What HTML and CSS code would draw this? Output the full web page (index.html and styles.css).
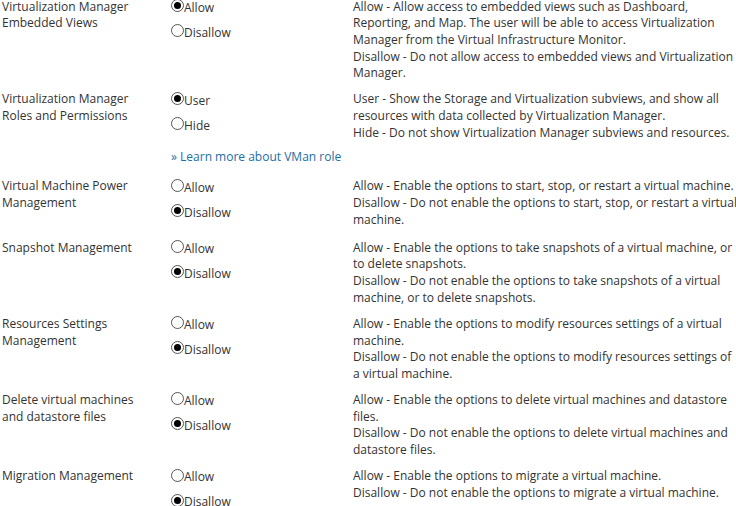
FILE: index.html
```html
<!DOCTYPE html>
<html lang="en">
<head>
    <meta charset="UTF-8">
    <title>Virtualization Permissions</title>
    <link rel="stylesheet" href="styles.css">
</head>
<body>
    <div class="settings">
        <div class="row">
            <div class="label">Virtualization Manager Embedded Views</div>
            <div class="options">
                <div class="choices">
                    <div class="option"><span class="radio checked"></span>Allow</div>
                    <div class="option"><span class="radio"></span>Disallow</div>
                </div>
            </div>
            <div class="desc">Allow - Allow access to embedded views such as Dashboard, Reporting, and Map. The user will be able to access Virtualization Manager from the Virtual Infrastructure Monitor.<br>Disallow - Do not allow access to embedded views and Virtualization Manager.</div>
        </div>
        <div class="row">
            <div class="label">Virtualization Manager Roles and Permissions</div>
            <div class="options">
                <div class="choices">
                    <div class="option"><span class="radio checked"></span>User</div>
                    <div class="option"><span class="radio"></span>Hide</div>
                </div>
                <a class="more" href="#">&raquo; Learn more about VMan role</a>
            </div>
            <div class="desc">User - Show the Storage and Virtualization subviews, and show all resources with data collected by Virtualization Manager.<br>Hide - Do not show Virtualization Manager subviews and resources.</div>
        </div>
        <div class="row">
            <div class="label">Virtual Machine Power Management</div>
            <div class="options">
                <div class="choices">
                    <div class="option"><span class="radio"></span>Allow</div>
                    <div class="option"><span class="radio checked"></span>Disallow</div>
                </div>
            </div>
            <div class="desc">Allow - Enable the options to start, stop, or restart a virtual machine.<br>Disallow - Do not enable the options to start, stop, or restart a virtual machine.</div>
        </div>
        <div class="row">
            <div class="label">Snapshot Management</div>
            <div class="options">
                <div class="choices">
                    <div class="option"><span class="radio"></span>Allow</div>
                    <div class="option"><span class="radio checked"></span>Disallow</div>
                </div>
            </div>
            <div class="desc">Allow - Enable the options to take snapshots of a virtual machine, or to delete snapshots.<br>Disallow - Do not enable the options to take snapshots of a virtual machine, or to delete snapshots.</div>
        </div>
        <div class="row">
            <div class="label">Resources Settings Management</div>
            <div class="options">
                <div class="choices">
                    <div class="option"><span class="radio"></span>Allow</div>
                    <div class="option"><span class="radio checked"></span>Disallow</div>
                </div>
            </div>
            <div class="desc">Allow - Enable the options to modify resources settings of a virtual machine.<br>Disallow - Do not enable the options to modify resources settings of a virtual machine.</div>
        </div>
        <div class="row">
            <div class="label">Delete virtual machines and datastore files</div>
            <div class="options">
                <div class="choices">
                    <div class="option"><span class="radio"></span>Allow</div>
                    <div class="option"><span class="radio checked"></span>Disallow</div>
                </div>
            </div>
            <div class="desc">Allow - Enable the options to delete virtual machines and datastore files.<br>Disallow - Do not enable the options to delete virtual machines and datastore files.</div>
        </div>
        <div class="row">
            <div class="label">Migration Management</div>
            <div class="options">
                <div class="choices">
                    <div class="option"><span class="radio"></span>Allow</div>
                    <div class="option"><span class="radio checked"></span>Disallow</div>
                </div>
            </div>
            <div class="desc">Allow - Enable the options to migrate a virtual machine.<br>Disallow - Do not enable the options to migrate a virtual machine.</div>
        </div>
    </div>
</body>
</html>
```

FILE: styles.css
```css
body {
    margin: 0;
    font-family: "Open Sans", Arial, sans-serif;
    font-size: 12px;
    line-height: 16.7px;
    color: #333;
    background: #fff;
    overflow: hidden;
}
.settings {
    padding: 0 0 0 2px;
    margin-top: -1.4px;
}
.row {
    display: grid;
    grid-template-columns: 169px 182px 385px;
    padding-bottom: 9.3px;
}
.label {
    padding-right: 20px;
}
.options {
    display: flex;
    flex-direction: column;
}
.choices {
    padding-bottom: 2px;
}
.option {
    display: flex;
    align-items: center;
    height: 19px;
    margin-bottom: 6px;
}
.radio {
    width: 11px;
    height: 11px;
    border: 1px solid #555;
    border-radius: 50%;
    box-sizing: content-box;
    position: relative;
    margin-top: -5px;
}
.radio.checked::after {
    content: "";
    position: absolute;
    left: 2px;
    top: 2px;
    width: 7px;
    height: 7px;
    border-radius: 50%;
    background: #000;
}
.more {
    color: #1c6ea4;
    text-decoration: none;
    margin-top: 6px;
    margin-bottom: 3px;
}
```
